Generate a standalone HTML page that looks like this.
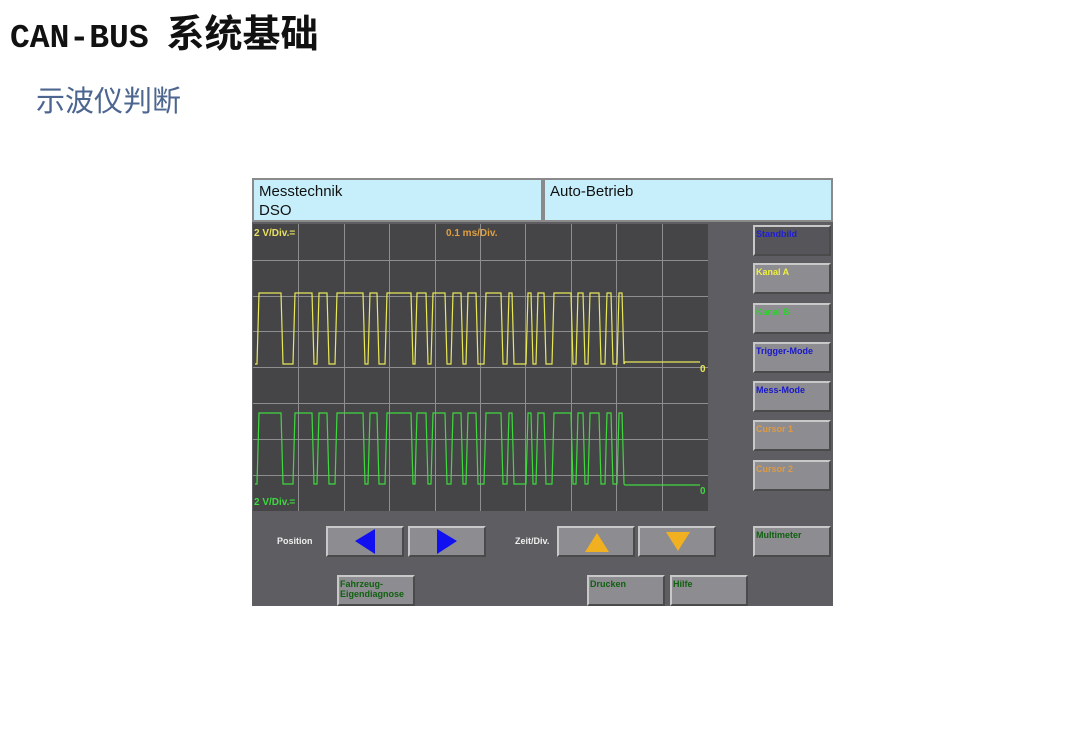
<!DOCTYPE html>
<html><head><meta charset="utf-8"><style>
*{margin:0;padding:0;box-sizing:border-box}
body{width:1080px;height:748px;background:#fff;position:relative;overflow:hidden;font-family:"Liberation Sans",sans-serif}
.t{position:absolute;left:10px;top:9px;font:bold 33px "Liberation Mono","Noto Sans CJK SC",monospace;color:#111;white-space:nowrap;line-height:44px}
.t span{font-family:"Noto Sans CJK SC",sans-serif;font-size:38px;font-weight:bold;margin-left:-2px}
.s{position:absolute;left:36px;top:80px;font:29px "Noto Sans CJK SC",sans-serif;color:#4c6690;line-height:38px}
.scr{position:absolute;left:252px;top:178px;width:581px;height:428px;background:#5e5d62}
.hd{position:absolute;top:0;height:44px;background:#c6effb;border:2px solid #8a8a8a;font-size:15px;color:#111;line-height:19px;padding:2px 5px}
.btn{position:absolute;width:78px;height:31px;background:#8d8c91;border-top:2px solid #c8c8c8;border-left:2px solid #c8c8c8;border-right:2px solid #4a4a4a;border-bottom:2px solid #4a4a4a;font:bold 9px "Liberation Sans",sans-serif;padding:2px 1px;line-height:10px}
.lbl{position:absolute;color:#eee;font:bold 9px "Liberation Sans",sans-serif}
</style></head><body>
<div class="t">CAN-BUS <span>系统基础</span></div>
<div class="s">示波仪判断</div>
<div class="scr">
<div class="hd" style="left:0;width:291px">Messtechnik<br>DSO</div>
<div class="hd" style="left:291px;width:290px">Auto-Betrieb</div>
<svg style="position:absolute;left:1px;top:46px" width="455" height="287">
<rect width="455" height="287" fill="#454547"/>
<g id="grid" stroke="#8e8e90" stroke-width="1"></g>
<path id="y" fill="none" stroke="#e8e85a" stroke-width="1.2"/>
<path id="g" fill="none" stroke="#3fd83f" stroke-width="1.2"/>
<text x="1" y="12" fill="#e8e060" font-size="10" font-weight="bold" font-family="Liberation Sans">2 V/Div.=</text>
<text x="193" y="12" fill="#e0a040" font-size="10" font-weight="bold" font-family="Liberation Sans">0.1 ms/Div.</text>
<text x="1" y="281" fill="#3fd83f" font-size="10" font-weight="bold" font-family="Liberation Sans">2 V/Div.=</text>
<text x="447" y="148" fill="#e8e85a" font-size="10" font-weight="bold" font-family="Liberation Sans">0</text>
<text x="447" y="270" fill="#3fd83f" font-size="10" font-weight="bold" font-family="Liberation Sans">0</text>
</svg>
<div class="btn" style="left:501px;top:47px;background:#55555a;color:#2020d0">Standbild</div>
<div class="btn" style="left:501px;top:85px;color:#f0f040">Kanal A</div>
<div class="btn" style="left:501px;top:125px;color:#30d030">Kanal B</div>
<div class="btn" style="left:501px;top:164px;color:#1818c8">Trigger-Mode</div>
<div class="btn" style="left:501px;top:203px;color:#1818c8">Mess-Mode</div>
<div class="btn" style="left:501px;top:242px;color:#e09a40">Cursor 1</div>
<div class="btn" style="left:501px;top:282px;color:#e09a40">Cursor 2</div>
<div class="btn" style="left:501px;top:348px;color:#106010">Multimeter</div>
<div class="lbl" style="left:25px;top:358px">Position</div>
<div class="lbl" style="left:263px;top:358px">Zeit/Div.</div>
<div class="btn" style="left:74px;top:348px"><svg width="74" height="27" style="position:absolute;left:0;top:0"><polygon points="27,13 47,1 47,26" fill="#1010f0"/></svg></div>
<div class="btn" style="left:156px;top:348px"><svg width="74" height="27" style="position:absolute;left:0;top:0"><polygon points="27,1 47,13 27,26" fill="#1010f0"/></svg></div>
<div class="btn" style="left:305px;top:348px"><svg width="74" height="27" style="position:absolute;left:0;top:0"><polygon points="26,24 38,5 50,24" fill="#f0b020"/></svg></div>
<div class="btn" style="left:386px;top:348px"><svg width="74" height="27" style="position:absolute;left:0;top:0"><polygon points="26,4 50,4 38,23" fill="#f0b020"/></svg></div>
<div class="btn" style="left:85px;top:397px;color:#106010">Fahrzeug-<br>Eigendiagnose</div>
<div class="btn" style="left:335px;top:397px;color:#106010">Drucken</div>
<div class="btn" style="left:418px;top:397px;color:#106010">Hilfe</div>
</div>
<script>
var ns="http://www.w3.org/2000/svg",g=document.getElementById('grid');
for(var i=1;i<10;i++){var l=document.createElementNS(ns,'line');var x=Math.round(i*45.4)+.5;l.setAttribute('x1',x);l.setAttribute('x2',x);l.setAttribute('y1',0);l.setAttribute('y2',287);g.appendChild(l);}
for(var i=1;i<8;i++){var l=document.createElementNS(ns,'line');var y=Math.round(i*35.8)+.5;l.setAttribute('y1',y);l.setAttribute('y2',y);l.setAttribute('x1',0);l.setAttribute('x2',455);g.appendChild(l);}
var e=[258,282,294,313,318,328,336,364,369,378,386,412,416,427,432,446,452,462,467,477,485,502,508,513,527,532,537,545,553,572,577,584,589,600,606,612,618,623];
function wave(hi,lo,flat){var ox=253,d='M2 '+lo,st=0;for(var i=0;i<e.length;i++){var x=e[i]-ox;var y1=st?hi:lo,y2=st?lo:hi;d+=' L'+(x-1)+' '+y1+' L'+(x+1)+' '+y2;st=1-st;}d+=' L'+(623-ox+2)+' '+flat+' L447 '+flat;return d;}
document.getElementById('y').setAttribute('d',wave(69,140,138));
document.getElementById('g').setAttribute('d',wave(189,260,261));
</script>
</body></html>
